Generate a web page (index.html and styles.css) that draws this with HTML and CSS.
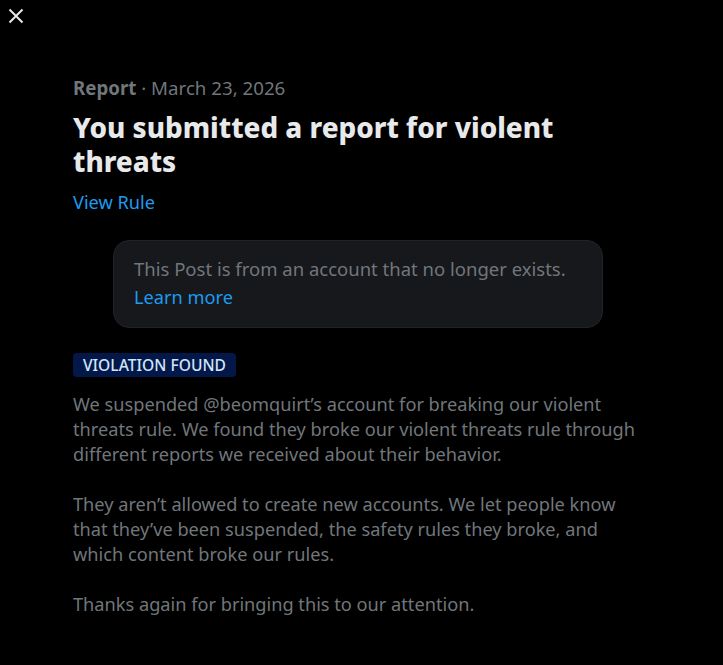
FILE: index.html
```html
<!DOCTYPE html>
<html>
<head>
<meta charset="utf-8">
<link rel="stylesheet" href="styles.css">
</head>
<body>
<div class="page">
  <button class="close" aria-label="Close">
    <svg viewBox="0 0 16 16" width="16" height="16"><path d="M1.5 1.5 L14.5 14.5 M14.5 1.5 L1.5 14.5" stroke="#e7e9ea" stroke-width="2" fill="none"/></svg>
  </button>
  <main class="content">
    <div class="meta"><span class="meta-strong">Report</span> · March 23, 2026</div>
    <h1 class="title">You submitted a report for violent threats</h1>
    <a class="link view-rule">View Rule</a>
    <div class="notice">
      <div class="notice-text">This Post is from an account that no longer exists.</div>
      <a class="link">Learn more</a>
    </div>
    <div class="badge">VIOLATION FOUND</div>
    <div class="body-text">
      <p>We suspended @beomquirt’s account for breaking our violent threats rule. We found they broke our violent threats rule through different reports we received about their behavior.</p>
      <p>They aren’t allowed to create new accounts. We let people know that they’ve been suspended, the safety rules they broke, and which content broke our rules.</p>
      <p>Thanks again for bringing this to our attention.</p>
    </div>
  </main>
</div>
</body>
</html>
```
FILE: styles.css
```css
html, body {
  margin: 0;
  padding: 0;
  background: #000;
}
body {
  font-family: "Noto Sans", "Open Sans", sans-serif;
  color: #e7e9ea;
  width: 723px;
  height: 665px;
  overflow: hidden;
}
.page {
  position: relative;
  height: 665px;
}
.close {
  position: absolute;
  left: 7px;
  top: 7px;
  width: 17px;
  height: 17px;
  padding: 0;
  border: 0;
  background: transparent;
  display: flex;
  align-items: center;
  justify-content: center;
}
.content {
  padding: 76px 73px 0 73px;
  display: flex;
  flex-direction: column;
  align-items: flex-start;
}
.meta {
  font-size: 18.7px;
  line-height: 24px;
  color: #71767b;
}
.meta-strong {
  font-weight: 700;
}
.title {
  margin: 10px 0 0 0;
  width: 577px;
  font-size: 27.8px;
  line-height: 34px;
  font-weight: 800;
  color: #e7e9ea;
}
.link {
  color: #1d9bf0;
  font-size: 18.2px;
  line-height: 24px;
}
.view-rule {
  margin-top: 12px;
}
.notice {
  margin: 26px 0 0 40px;
  width: 448px;
  padding: 16px 20px 18px 20px;
  background: #16181c;
  border: 1px solid #202327;
  border-radius: 16px;
  display: flex;
  flex-direction: column;
  align-items: flex-start;
  gap: 4px;
}
.notice-text {
  font-size: 18.5px;
  line-height: 24px;
  color: #71767b;
}
.badge {
  margin-top: 25px;
  background: #031849;
  color: #cfe6f9;
  font-size: 15.6px;
  line-height: 24px;
  height: 24px;
  font-weight: 500;
  padding: 0 10px;
  border-radius: 4px;
}
.body-text {
  margin-top: 15px;
  width: 577px;
  font-size: 18.2px;
  line-height: 25px;
  color: #71767b;
}
.body-text p {
  margin: 0 0 25px 0;
}
```
